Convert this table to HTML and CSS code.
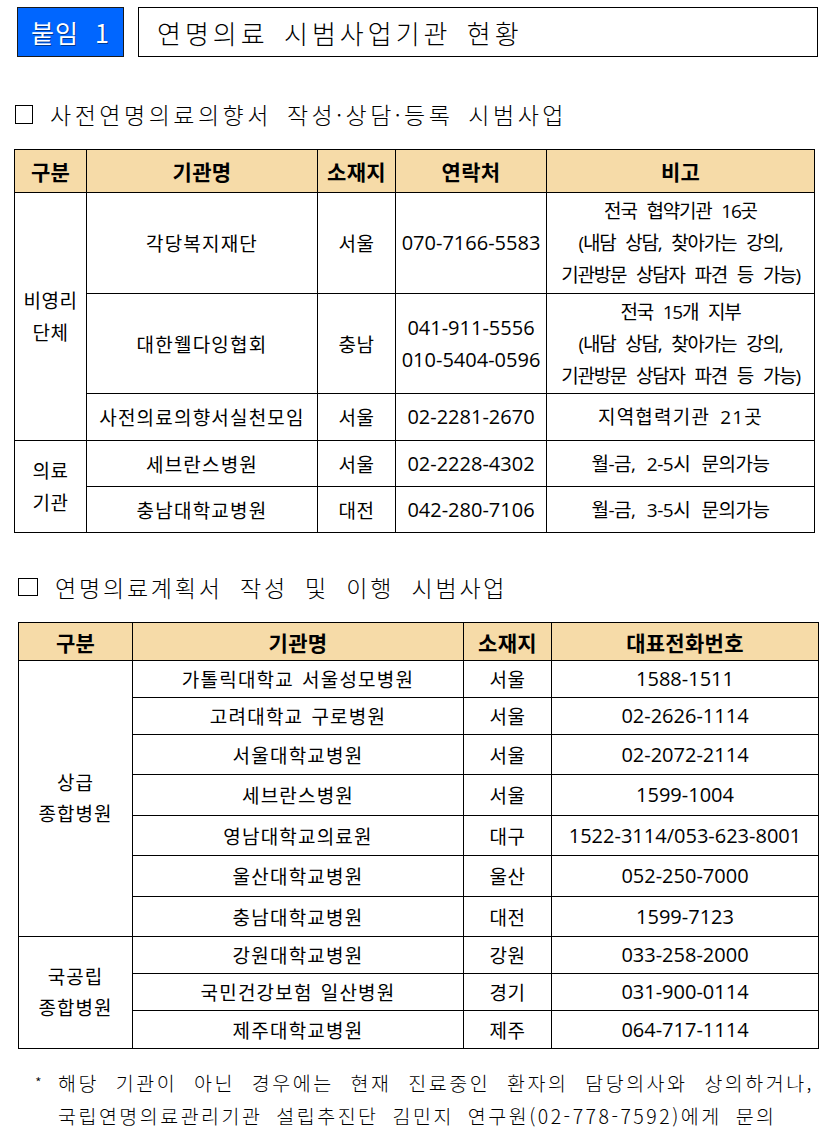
FILE: index.html
```html
<!DOCTYPE html>
<html lang="ko">
<head>
<meta charset="utf-8">
<title>연명의료 시범사업기관 현황</title>
<link rel="stylesheet" href="styles.css">
</head>
<body>
<div class="page">
  <div class="top">
    <div class="tag">붙임 1</div>
    <div class="title">연명의료 시범사업기관 현황</div>
  </div>

  <h2 class="sec sec1"><span class="box"></span><span class="sec-text">사전연명의료의향서 작성·상담·등록 시범사업</span></h2>

  <table class="tbl t1">
    <colgroup>
      <col class="w72"><col class="w231"><col class="w78"><col class="w151"><col class="w268">
    </colgroup>
    <tr class="head h43">
      <th>구분</th><th>기관명</th><th>소재지</th><th>연락처</th><th>비고</th>
    </tr>
    <tr class="h101">
      <td rowspan="3" class="grp">비영리<br>단체</td>
      <td class="name">각당복지재단</td>
      <td class="loc">서울</td>
      <td class="tel">070-7166-5583</td>
      <td class="memo">전국 협약기관 16곳<br>(내담 상담, 찾아가는 강의,<br>기관방문 상담자 파견 등 가능)</td>
    </tr>
    <tr class="h100">
      <td class="name">대한웰다잉협회</td>
      <td class="loc">충남</td>
      <td class="tel">041-911-5556<br>010-5404-0596</td>
      <td class="memo">전국 15개 지부<br>(내담 상담, 찾아가는 강의,<br>기관방문 상담자 파견 등 가능)</td>
    </tr>
    <tr class="h47">
      <td class="name">사전의료의향서실천모임</td>
      <td class="loc">서울</td>
      <td class="tel">02-2281-2670</td>
      <td class="memo spaced">지역협력기관 21곳</td>
    </tr>
    <tr class="h46">
      <td rowspan="2" class="grp">의료<br>기관</td>
      <td class="name">세브란스병원</td>
      <td class="loc">서울</td>
      <td class="tel">02-2228-4302</td>
      <td class="memo wide">월-금, 2-5시 문의가능</td>
    </tr>
    <tr class="h46">
      <td class="name">충남대학교병원</td>
      <td class="loc">대전</td>
      <td class="tel">042-280-7106</td>
      <td class="memo wide">월-금, 3-5시 문의가능</td>
    </tr>
  </table>

  <h2 class="sec sec2"><span class="box"></span><span class="sec-text">연명의료계획서 작성 및 이행 시범사업</span></h2>

  <table class="tbl t2">
    <colgroup>
      <col class="w114"><col class="w331"><col class="w88"><col class="w267">
    </colgroup>
    <tr class="head h38">
      <th>구분</th><th>기관명</th><th>소재지</th><th>대표전화번호</th>
    </tr>
    <tr class="h37">
      <td rowspan="7" class="grp">상급<br>종합병원</td>
      <td class="name">가톨릭대학교 서울성모병원</td><td class="loc">서울</td><td class="tel">1588-1511</td>
    </tr>
    <tr class="h37"><td class="name">고려대학교 구로병원</td><td class="loc">서울</td><td class="tel">02-2626-1114</td></tr>
    <tr class="h40"><td class="name">서울대학교병원</td><td class="loc">서울</td><td class="tel">02-2072-2114</td></tr>
    <tr class="h41"><td class="name">세브란스병원</td><td class="loc">서울</td><td class="tel">1599-1004</td></tr>
    <tr class="h40"><td class="name">영남대학교의료원</td><td class="loc">대구</td><td class="tel">1522-3114/053-623-8001</td></tr>
    <tr class="h41"><td class="name">울산대학교병원</td><td class="loc">울산</td><td class="tel">052-250-7000</td></tr>
    <tr class="h40"><td class="name">충남대학교병원</td><td class="loc">대전</td><td class="tel">1599-7123</td></tr>
    <tr class="h37">
      <td rowspan="3" class="grp">국공립<br>종합병원</td>
      <td class="name">강원대학교병원</td><td class="loc">강원</td><td class="tel">033-258-2000</td>
    </tr>
    <tr class="h37"><td class="name">국민건강보험 일산병원</td><td class="loc">경기</td><td class="tel">031-900-0114</td></tr>
    <tr class="h38"><td class="name">제주대학교병원</td><td class="loc">제주</td><td class="tel">064-717-1114</td></tr>
  </table>

  <div class="note">
    <p class="note-l1"><span class="star">*</span><span class="note-text">해당 기관이 아닌 경우에는 현재 진료중인 환자의 담당의사와 상의하거나,</span></p>
    <p class="note-l2">국립연명의료관리기관 설립추진단 김민지 연구원<span class="num">(02-778-7592)</span>에게 문의</p>
  </div>
</div>
</body>
</html>
```

FILE: styles.css
```css
* { box-sizing: border-box; }

html, body {
  margin: 0;
  padding: 0;
  background: #fff;
  color: #000;
}

.page {
  width: 832px;
  font-family: "Open Sans", "Noto Sans CJK KR", sans-serif;
}

/* top bar */
.top {
  display: flex;
  gap: 14px;
  padding-left: 17px;
  padding-top: 7px;
}

.tag {
  width: 107px;
  height: 50px;
  background: #0066ff;
  border: 1px solid #1a1a1a;
  color: #fff;
  font-family: "Noto Sans CJK KR", "Liberation Serif", serif;
  font-size: 25px;
  letter-spacing: 1px;
  word-spacing: 8px;
  display: flex;
  align-items: center;
  justify-content: center;
  text-shadow: 1px 1px 0 rgba(0, 0, 0, 0.45);
}

.title {
  width: 680px;
  height: 50px;
  border: 1px solid #000;
  display: flex;
  align-items: center;
  padding-left: 18px;
  font-family: "Noto Sans CJK KR", sans-serif;
  font-weight: 300;
  font-size: 26px;
  letter-spacing: 4px;
  word-spacing: 4px;
}

/* section headings */
.sec {
  display: flex;
  align-items: center;
  margin: 0;
  height: 30px;
  font-family: "Noto Sans CJK KR", sans-serif;
  font-weight: 300;
  font-size: 23px;
}

.sec .box {
  width: 18px;
  height: 19px;
  border: 1px solid #000;
  flex: none;
}

.sec1 {
  margin-top: 42px;
  padding-left: 15px;
  gap: 17px;
  letter-spacing: 3.5px;
  word-spacing: 5px;
}

.sec2 {
  margin-top: 39px;
  padding-left: 18px;
  gap: 17px;
  letter-spacing: 2.8px;
  word-spacing: 8px;
}

.sec2 .box {
  width: 20px;
  height: 18px;
}

/* tables */
.tbl {
  border-collapse: collapse;
  table-layout: fixed;
  width: 800px;
  margin-top: 20px;
}

.t1 { margin-left: 14px; }
.t2 { margin-left: 18px; }

.tbl th,
.tbl td {
  border: 1px solid #000;
  padding: 0;
  text-align: center;
  vertical-align: middle;
  white-space: nowrap;
  font-size: 19px;
  font-weight: 400;
}

.tbl th {
  background: #f6dba8;
  font-weight: 700;
  font-size: 21px;
  letter-spacing: 0.3px;
}

col.w72 { width: 72px; }
col.w231 { width: 231px; }
col.w78 { width: 78px; }
col.w151 { width: 151px; }
col.w268 { width: 268px; }
col.w114 { width: 114px; }
col.w331 { width: 331px; }
col.w88 { width: 88px; }
col.w267 { width: 267px; }

tr.h43 { height: 43px; }
tr.h101 { height: 101px; }
tr.h100 { height: 100px; }
tr.h47 { height: 47px; }
tr.h46 { height: 46px; }
tr.h38 { height: 38px; }
tr.h37 { height: 37px; }
tr.h40 { height: 40px; }
tr.h41 { height: 41px; }

.tbl .grp {
  line-height: 32px;
  letter-spacing: 0.5px;
}

.t2 .grp {
  line-height: 31px;
  letter-spacing: 1px;
}

.tbl .name {
  letter-spacing: 1.2px;
  word-spacing: 2px;
}

.tbl .loc {
  letter-spacing: 0.5px;
}

.tbl .tel {
  line-height: 32px;
  letter-spacing: 0;
  font-size: 20px;
}

.tbl .memo {
  line-height: 32px;
  letter-spacing: -1.2px;
  word-spacing: 6px;
}

.tbl .memo.spaced {
  letter-spacing: 1.2px;
  word-spacing: 4px;
}

.tbl .memo.wide {
  letter-spacing: -0.5px;
  word-spacing: 7px;
}

/* footnote */
.note {
  margin-top: 17px;
  font-family: "Noto Sans CJK KR", sans-serif;
  font-weight: 300;
  font-size: 19.5px;
  line-height: 33px;
}

.note p {
  margin: 0;
}

.note-l1 {
  display: flex;
  padding-left: 35px;
  padding-right: 18px;
}

.star {
  width: 23px;
  flex: none;
  font-size: 15px;
}

.note-text {
  flex: 1;
  text-align: justify;
  text-align-last: justify;
  letter-spacing: 2.5px;
}

.note-l2 {
  padding-left: 58px;
  letter-spacing: 2.5px;
  word-spacing: 6px;
}

.note-l2 .num {
  letter-spacing: 2.5px;
}
```
